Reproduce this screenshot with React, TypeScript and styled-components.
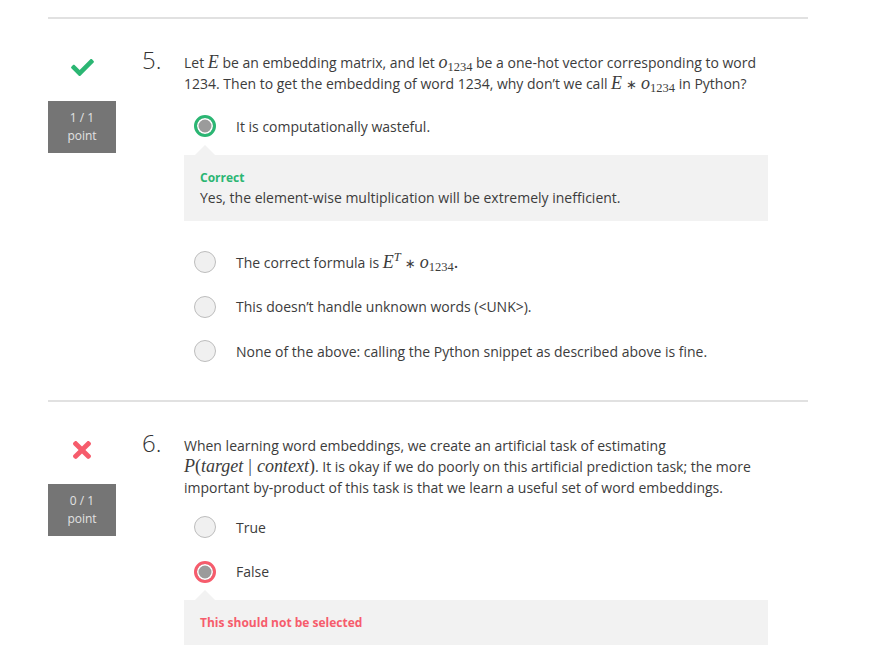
import React from "react";
import styled, { createGlobalStyle, css } from "styled-components";

const Global = createGlobalStyle`
  html, body { margin: 0; padding: 0; background: #fff; }
  body { font-family: "Open Sans", "Noto Sans", sans-serif; color: #3c3c3c; }
`;

const Page = styled.div`
  padding: 17px 0 0 48px;
  width: 760px;
`;

const Question = styled.section<{ $last?: boolean }>`
  display: grid;
  grid-template-columns: 68px 68px 584px;
  border-top: 2px solid #e1e1e1;
  padding: 33px 0 ${(p) => (p.$last ? "20px" : "38px")} 0;
`;

const Side = styled.div`
  display: flex;
  flex-direction: column;
  align-items: center;
  gap: 22px;
  padding-top: 3px;
`;

const IconBox = styled.div`
  height: 24px;
  display: flex;
  align-items: center;
  justify-content: center;
`;

const Score = styled.div`
  width: 68px;
  height: 52px;
  box-sizing: border-box;
  padding-top: 8px;
  background: #757575;
  color: #e2e2e2;
  font-size: 12px;
  line-height: 18px;
  text-align: center;
`;

const Num = styled.div`
  padding-left: 26px;
  font-size: 24px;
  font-weight: 300;
  line-height: 16px;
  color: #333;
`;

const Body = styled.div`
  display: flex;
  flex-direction: column;
`;

const Prompt = styled.div`
  font-size: 14px;
  line-height: 21px;
`;

const MathGroup = styled.span`
  white-space: nowrap;
`;

const M = styled.span<{ $up?: boolean }>`
  font-family: "Liberation Serif", "DejaVu Serif", serif;
  font-style: ${(p) => (p.$up ? "normal" : "italic")};
  font-size: 18px;
  line-height: 1;
`;

const Mid = styled.span`
  display: inline-block;
  font-family: "Liberation Serif", "DejaVu Serif", serif;
  font-size: 18px;
  line-height: 1;
  padding: 0 5px;
`;

const Sub = styled.sub`
  font-family: "Liberation Serif", "DejaVu Serif", serif;
  font-style: normal;
  font-size: 12.5px;
  vertical-align: -3px;
  line-height: 0;
`;

const Sup = styled.sup`
  font-family: "Liberation Serif", "DejaVu Serif", serif;
  font-style: italic;
  font-size: 12.5px;
  vertical-align: 7px;
  line-height: 0;
`;

const Op = styled.span`
  font-family: "DejaVu Sans", sans-serif;
  font-size: 13px;
  line-height: 1;
  margin: 0 4px;
`;

const Options = styled.div<{ $mt: number }>`
  display: flex;
  flex-direction: column;
  gap: 22.5px;
  margin-top: ${(p) => p.$mt}px;
`;

const Option = styled.label`
  display: flex;
  align-items: center;
  gap: 20px;
  padding-left: 10px;
  font-size: 14px;
  line-height: 21px;
`;

type RadioState = "correct" | "wrong" | "none";

const Radio = styled.span<{ $state: RadioState }>`
  flex: none;
  width: 22px;
  height: 22px;
  box-sizing: border-box;
  border-radius: 50%;
  ${(p) =>
    p.$state === "none"
      ? css`
          background: #f0f0f0;
          border: 1px solid #bdbdbd;
        `
      : css`
          background: #9b9b9b;
          border: 3px solid ${p.$state === "correct" ? "#2bb673" : "#f65c6c"};
          box-shadow: inset 0 0 0 1.5px #fff;
        `}
`;

const Feedback = styled.div<{ $mt: number }>`
  position: relative;
  margin-top: ${(p) => p.$mt}px;
  background: #f2f2f2;
  padding: 14px 16px 13px;
  &::before {
    content: "";
    position: absolute;
    left: 11px;
    top: -10px;
    border-left: 10px solid transparent;
    border-right: 10px solid transparent;
    border-bottom: 10px solid #f2f2f2;
  }
`;

const FeedbackTitle = styled.div<{ $ok: boolean }>`
  font-size: 12px;
  font-weight: 700;
  line-height: 18px;
  color: ${(p) => (p.$ok ? "#2bb673" : "#f65c6c")};
`;

const FeedbackText = styled.div`
  font-size: 14px;
  line-height: 21px;
`;

const Check = () => (
  <svg width="23" height="17" viewBox="0 66 512 380" aria-hidden>
    <path
      fill="#2bb673"
      d="M173.898 439.404l-166.4-166.4c-9.997-9.997-9.997-26.206 0-36.204l36.203-36.204c9.997-9.998 26.207-9.998 36.204 0L192 312.69 432.095 72.596c9.997-9.997 26.207-9.997 36.204 0l36.203 36.204c9.997 9.997 9.997 26.206 0 36.204l-294.4 294.401c-9.998 9.997-26.207 9.997-36.204-.001z"
    />
  </svg>
);

const Cross = () => (
  <svg width="18" height="18" viewBox="0 80 352 352" aria-hidden>
    <path
      fill="#f65c6c"
      d="M242.72 256l100.07-100.07c12.28-12.28 12.28-32.19 0-44.48l-22.24-22.24c-12.28-12.28-32.19-12.28-44.48 0L176 189.28 75.93 89.21c-12.28-12.28-32.19-12.28-44.48 0L9.21 111.45c-12.28 12.28-12.28 32.19 0 44.48L109.28 256 9.21 356.07c-12.28 12.28-12.28 32.19 0 44.48l22.24 22.24c12.28 12.28 32.2 12.28 44.48 0L176 322.72l100.07 100.07c12.28 12.28 32.2 12.28 44.48 0l22.24-22.24c12.28-12.28 12.28-32.19 0-44.48L242.72 256z"
    />
  </svg>
);

const O1234 = () => (
  <MathGroup>
    <M>o</M>
    <Sub>1234</Sub>
  </MathGroup>
);

export default function App() {
  return (
    <Page>
      <Global />
      <Question>
        <Side>
          <IconBox>
            <Check />
          </IconBox>
          <Score>
            1 / 1
            <br />
            point
          </Score>
        </Side>
        <Num>5.</Num>
        <Body>
          <Prompt>
            Let <M>E</M> be an embedding matrix, and let <O1234 /> be a one-hot
            vector corresponding to word 1234. Then to get the embedding of word
            1234, why don’t we call{" "}
            <MathGroup>
              <M>E</M>
              <Op>∗</Op>
              <O1234 />
            </MathGroup>{" "}
            in Python?
          </Prompt>
          <Options $mt={21}>
            <Option>
              <Radio $state="correct" />
              It is computationally wasteful.
            </Option>
          </Options>
          <Feedback $mt={18}>
            <FeedbackTitle $ok>Correct</FeedbackTitle>
            <FeedbackText>
              Yes, the element-wise multiplication will be extremely inefficient.
            </FeedbackText>
          </Feedback>
          <Options $mt={30}>
            <Option>
              <Radio $state="none" />
              <span>
                The correct formula is{" "}
                <MathGroup>
                  <M>E</M>
                  <Sup>T</Sup>
                  <Op>∗</Op>
                  <O1234 />
                  <M $up>.</M>
                </MathGroup>
              </span>
            </Option>
            <Option>
              <Radio $state="none" />
              This doesn’t handle unknown words (&lt;UNK&gt;).
            </Option>
            <Option>
              <Radio $state="none" />
              None of the above: calling the Python snippet as described above is
              fine.
            </Option>
          </Options>
        </Body>
      </Question>
      <Question $last>
        <Side>
          <IconBox>
            <Cross />
          </IconBox>
          <Score>
            0 / 1
            <br />
            point
          </Score>
        </Side>
        <Num>6.</Num>
        <Body>
          <Prompt>
            When learning word embeddings, we create an artificial task of
            estimating{" "}
            <MathGroup>
              <M>P</M>
              <M $up>(</M>
              <M>target</M>
              <Mid>|</Mid>
              <M>context</M>
              <M $up>)</M>
            </MathGroup>
            . It is okay if we do poorly on this artificial prediction task; the
            more important by-product of this task is that we learn a useful set
            of word embeddings.
          </Prompt>
          <Options $mt={18}>
            <Option>
              <Radio $state="none" />
              True
            </Option>
            <Option>
              <Radio $state="wrong" />
              False
            </Option>
          </Options>
          <Feedback $mt={17}>
            <FeedbackTitle $ok={false}>This should not be selected</FeedbackTitle>
          </Feedback>
        </Body>
      </Question>
    </Page>
  );
}
